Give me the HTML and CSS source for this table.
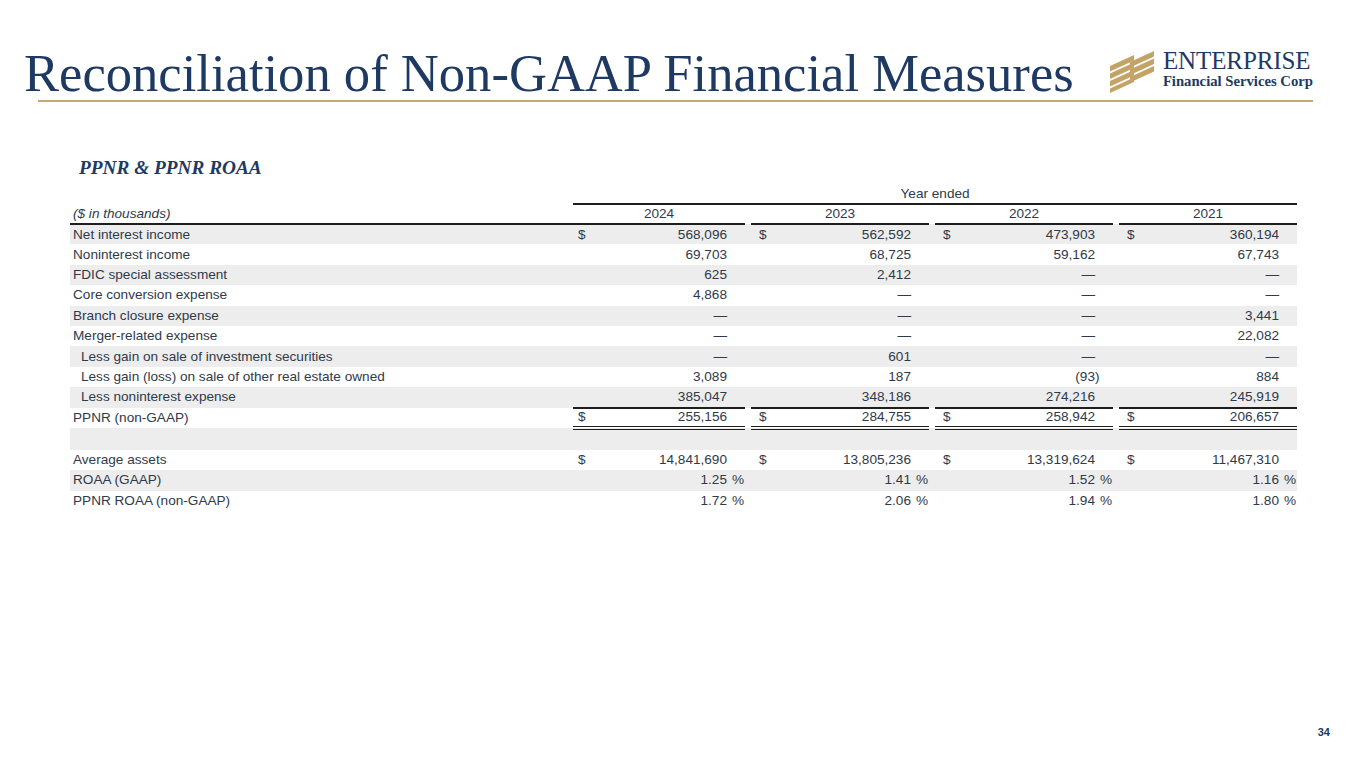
FILE: index.html
```html
<!DOCTYPE html>
<html lang="en">
<head>
<meta charset="utf-8">
<title>Reconciliation of Non-GAAP Financial Measures</title>
<link rel="stylesheet" href="styles.css">
</head>
<body>
<div class="slide">
  <header class="top">
    <h1 class="title">Reconciliation of Non-GAAP Financial Measures</h1>
    <div class="logo">
      <svg class="mark" width="48" height="42" viewBox="0 0 48 42" aria-hidden="true">
        <g fill="#c4a466">
          <polygon points="2,15 26,4 26,9.5 2,20.5"/>
          <polygon points="2,22.5 26,11.5 26,17 2,28"/>
          <polygon points="2,30 26,19 26,24.5 2,35.5"/>
          <polygon points="2,37.5 26,26.5 26,31 2,42"/>
          <polygon points="22,11 46,0 46,5.5 22,16.5"/>
          <polygon points="22,18.5 46,7.5 46,13 22,24"/>
          <polygon points="22,26 46,15 46,20.5 22,31.5"/>
        </g>
      </svg>
      <div class="logo-text">
        <div class="logo-name">ENTERPRISE</div>
        <div class="logo-sub">Financial Services Corp</div>
      </div>
    </div>
  </header>
  <div class="rule"></div>

  <main class="content">
    <h2 class="subtitle">PPNR &amp; PPNR ROAA</h2>
    <table class="fin">
      <colgroup>
        <col class="c-label">
        <col class="c-d1"><col class="c-v"><col class="c-p">
        <col class="c-gap">
        <col class="c-d"><col class="c-v"><col class="c-p">
        <col class="c-gap">
        <col class="c-d"><col class="c-v"><col class="c-p">
        <col class="c-gap">
        <col class="c-d"><col class="c-v"><col class="c-p">
      </colgroup>
      <thead>
        <tr class="r-period">
          <th></th>
          <th colspan="15" class="period"><div class="period-in">Year ended</div></th>
        </tr>
        <tr class="r-years">
          <th class="unit">($ in thousands)</th>
          <th colspan="3" class="yr">2024</th><th class="gap"></th>
          <th colspan="3" class="yr">2023</th><th class="gap"></th>
          <th colspan="3" class="yr">2022</th><th class="gap"></th>
          <th colspan="3" class="yr">2021</th>
        </tr>
      </thead>
      <tbody>
        <tr class="alt">
          <td class="lbl">Net interest income</td>
          <td class="d first">$</td><td class="v">568,096</td><td class="p"></td><td class="gap"></td>
          <td class="d">$</td><td class="v">562,592</td><td class="p"></td><td class="gap"></td>
          <td class="d">$</td><td class="v">473,903</td><td class="p"></td><td class="gap"></td>
          <td class="d">$</td><td class="v">360,194</td><td class="p"></td>
        </tr>
        <tr>
          <td class="lbl">Noninterest income</td>
          <td class="d first"></td><td class="v">69,703</td><td class="p"></td><td class="gap"></td>
          <td class="d"></td><td class="v">68,725</td><td class="p"></td><td class="gap"></td>
          <td class="d"></td><td class="v">59,162</td><td class="p"></td><td class="gap"></td>
          <td class="d"></td><td class="v">67,743</td><td class="p"></td>
        </tr>
        <tr class="alt">
          <td class="lbl">FDIC special assessment</td>
          <td class="d first"></td><td class="v">625</td><td class="p"></td><td class="gap"></td>
          <td class="d"></td><td class="v">2,412</td><td class="p"></td><td class="gap"></td>
          <td class="d"></td><td class="v">—</td><td class="p"></td><td class="gap"></td>
          <td class="d"></td><td class="v">—</td><td class="p"></td>
        </tr>
        <tr>
          <td class="lbl">Core conversion expense</td>
          <td class="d first"></td><td class="v">4,868</td><td class="p"></td><td class="gap"></td>
          <td class="d"></td><td class="v">—</td><td class="p"></td><td class="gap"></td>
          <td class="d"></td><td class="v">—</td><td class="p"></td><td class="gap"></td>
          <td class="d"></td><td class="v">—</td><td class="p"></td>
        </tr>
        <tr class="alt">
          <td class="lbl">Branch closure expense</td>
          <td class="d first"></td><td class="v">—</td><td class="p"></td><td class="gap"></td>
          <td class="d"></td><td class="v">—</td><td class="p"></td><td class="gap"></td>
          <td class="d"></td><td class="v">—</td><td class="p"></td><td class="gap"></td>
          <td class="d"></td><td class="v">3,441</td><td class="p"></td>
        </tr>
        <tr>
          <td class="lbl">Merger-related expense</td>
          <td class="d first"></td><td class="v">—</td><td class="p"></td><td class="gap"></td>
          <td class="d"></td><td class="v">—</td><td class="p"></td><td class="gap"></td>
          <td class="d"></td><td class="v">—</td><td class="p"></td><td class="gap"></td>
          <td class="d"></td><td class="v">22,082</td><td class="p"></td>
        </tr>
        <tr class="alt">
          <td class="lbl ind">Less gain on sale of investment securities</td>
          <td class="d first"></td><td class="v">—</td><td class="p"></td><td class="gap"></td>
          <td class="d"></td><td class="v">601</td><td class="p"></td><td class="gap"></td>
          <td class="d"></td><td class="v">—</td><td class="p"></td><td class="gap"></td>
          <td class="d"></td><td class="v">—</td><td class="p"></td>
        </tr>
        <tr>
          <td class="lbl ind">Less gain (loss) on sale of other real estate owned</td>
          <td class="d first"></td><td class="v">3,089</td><td class="p"></td><td class="gap"></td>
          <td class="d"></td><td class="v">187</td><td class="p"></td><td class="gap"></td>
          <td class="d"></td><td class="v">(93</td><td class="p neg">)</td><td class="gap"></td>
          <td class="d"></td><td class="v">884</td><td class="p"></td>
        </tr>
        <tr class="alt sub-line">
          <td class="lbl ind">Less noninterest expense</td>
          <td class="d first"></td><td class="v">385,047</td><td class="p"></td><td class="gap"></td>
          <td class="d"></td><td class="v">348,186</td><td class="p"></td><td class="gap"></td>
          <td class="d"></td><td class="v">274,216</td><td class="p"></td><td class="gap"></td>
          <td class="d"></td><td class="v">245,919</td><td class="p"></td>
        </tr>
        <tr class="total">
          <td class="lbl">PPNR (non-GAAP)</td>
          <td class="d first">$</td><td class="v">255,156</td><td class="p"></td><td class="gap"></td>
          <td class="d">$</td><td class="v">284,755</td><td class="p"></td><td class="gap"></td>
          <td class="d">$</td><td class="v">258,942</td><td class="p"></td><td class="gap"></td>
          <td class="d">$</td><td class="v">206,657</td><td class="p"></td>
        </tr>
        <tr class="alt spacer">
          <td colspan="16"></td>
        </tr>
        <tr>
          <td class="lbl">Average assets</td>
          <td class="d first">$</td><td class="v">14,841,690</td><td class="p"></td><td class="gap"></td>
          <td class="d">$</td><td class="v">13,805,236</td><td class="p"></td><td class="gap"></td>
          <td class="d">$</td><td class="v">13,319,624</td><td class="p"></td><td class="gap"></td>
          <td class="d">$</td><td class="v">11,467,310</td><td class="p"></td>
        </tr>
        <tr class="alt">
          <td class="lbl">ROAA (GAAP)</td>
          <td class="d first"></td><td class="v">1.25</td><td class="p">%</td><td class="gap"></td>
          <td class="d"></td><td class="v">1.41</td><td class="p">%</td><td class="gap"></td>
          <td class="d"></td><td class="v">1.52</td><td class="p">%</td><td class="gap"></td>
          <td class="d"></td><td class="v">1.16</td><td class="p">%</td>
        </tr>
        <tr>
          <td class="lbl">PPNR ROAA (non-GAAP)</td>
          <td class="d first"></td><td class="v">1.72</td><td class="p">%</td><td class="gap"></td>
          <td class="d"></td><td class="v">2.06</td><td class="p">%</td><td class="gap"></td>
          <td class="d"></td><td class="v">1.94</td><td class="p">%</td><td class="gap"></td>
          <td class="d"></td><td class="v">1.80</td><td class="p">%</td>
        </tr>
      </tbody>
    </table>
  </main>

  <footer class="foot">
    <span class="page-num">34</span>
  </footer>
</div>
</body>
</html>
```

FILE: styles.css
```css
* { box-sizing: border-box; }

html, body {
  margin: 0;
  padding: 0;
  background: #ffffff;
}

.slide {
  width: 1365px;
  height: 768px;
  display: flex;
  flex-direction: column;
  font-family: "Liberation Sans", Arial, sans-serif;
  color: #2f3a4a;
}

/* ---------- header ---------- */
.top {
  display: flex;
  justify-content: space-between;
  align-items: flex-end;
  height: 100px;
  padding: 0 52px 0 24px;
}

.title {
  margin: 0 0 -1px 0;
  font-family: "Liberation Serif", "Times New Roman", serif;
  font-weight: normal;
  font-size: 52.6px;
  line-height: 56px;
  color: #1e3a62;
  white-space: nowrap;
}

.logo {
  display: flex;
  align-items: center;
  gap: 7px;
  margin-bottom: 7px;
}

.mark {
  display: block;
}

.logo-text {
  display: flex;
  flex-direction: column;
  color: #1e3a62;
  font-family: "Liberation Serif", "Times New Roman", serif;
  margin-top: -4px;
}

.logo-name {
  font-size: 25px;
  line-height: 18px;
  letter-spacing: -0.1px;
}

.logo-sub {
  margin-top: 4px;
  font-size: 14.7px;
  line-height: 14px;
  font-weight: bold;
  letter-spacing: 0;
}

.rule {
  height: 2px;
  margin: 0 52px 0 38px;
  background: #c6ab6f;
}

/* ---------- content ---------- */
.content {
  padding: 0 68px 0 70px;
}

.subtitle {
  margin: 55px 0 5px 9px;
  font-family: "Liberation Serif", "Times New Roman", serif;
  font-weight: bold;
  font-style: italic;
  font-size: 19.3px;
  line-height: 22px;
  color: #1e3a62;
}

.fin {
  width: 1227px;
  table-layout: fixed;
  border-collapse: collapse;
  font-size: 13.6px;
  line-height: 16px;
  color: #2f3a4a;
}

.c-label { width: 503px; }
.c-d1 { width: 24px; }
.c-d { width: 30px; }
.c-v { width: 130px; }
.c-p { width: 18px; }
.c-gap { width: 6px; }

.fin th,
.fin td {
  padding: 0;
  height: 20.4px;
  font-weight: normal;
  white-space: nowrap;
  vertical-align: middle;
}

.r-period th {
  height: 21px;
  text-align: center;
  vertical-align: bottom;
}

.period-in {
  border-bottom: 2px solid #1e1e1e;
  line-height: 16px;
  padding-bottom: 1px;
}

.r-years th {
  height: 19px;
  border-bottom: 2px solid #1e1e1e;
  text-align: center;
}

.r-years th.gap {
  border-bottom: none;
}

.r-years .unit {
  text-align: left;
  font-style: italic;
  padding-left: 3px;
}

tr.alt td {
  background: #ededed;
}

.lbl {
  padding-left: 3px !important;
}

.lbl.ind {
  padding-left: 11px !important;
}

.d {
  text-align: left;
  padding-left: 8px !important;
}

.d.first {
  padding-left: 5px !important;
}

.v {
  text-align: right;
}

.p {
  text-align: left;
  padding-left: 5px !important;
}

.p.neg {
  padding-left: 0 !important;
}

.sub-line td.d,
.sub-line td.v,
.sub-line td.p {
  border-bottom: 2px solid #1e1e1e;
}

.total td.d,
.total td.v,
.total td.p {
  border-bottom: 4px double #1e1e1e;
}

.spacer td {
  height: 22px;
}

/* ---------- footer ---------- */
.foot {
  margin-top: auto;
  display: flex;
  justify-content: flex-end;
  padding: 0 35px 30px 0;
}

.page-num {
  font-family: "Liberation Sans", Arial, sans-serif;
  font-weight: bold;
  font-size: 11px;
  color: #1e3a62;
}
```
